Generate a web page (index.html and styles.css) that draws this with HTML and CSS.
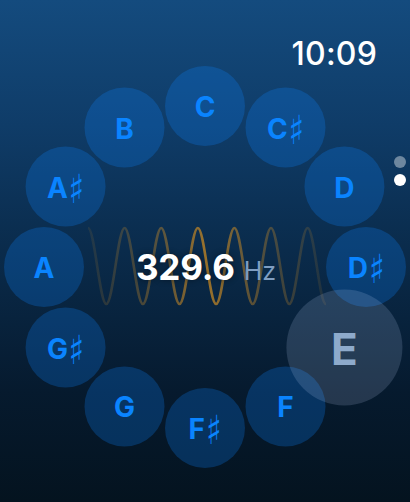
FILE: index.html
```html
<!DOCTYPE html>
<html lang="en">
<head>
<meta charset="utf-8">
<title>Tuner</title>
<link rel="stylesheet" href="styles.css">
</head>
<body>
<div class="screen">
  <header class="status">
    <span class="time">10:09</span>
  </header>
  <div class="pager">
    <span class="dot"></span>
    <span class="dot active"></span>
  </div>
  <main class="dial">
    <svg class="wave" width="238" height="84" viewBox="0 0 238 84" aria-hidden="true">
      <defs>
        <linearGradient id="wg" gradientUnits="userSpaceOnUse" x1="0" y1="0" x2="238" y2="0">
          <stop offset="0" stop-color="#b8822a" stop-opacity="0.12"/>
          <stop offset="0.3" stop-color="#b8822a" stop-opacity="0.45"/>
          <stop offset="0.5" stop-color="#c08524" stop-opacity="0.8"/>
          <stop offset="0.7" stop-color="#b8822a" stop-opacity="0.45"/>
          <stop offset="1" stop-color="#b8822a" stop-opacity="0.12"/>
        </linearGradient>
      </defs>
      <path fill="none" stroke="url(#wg)" stroke-width="2.6" stroke-linecap="round"
        d="M0,4 c6.66,0 11.64,76 18.3,76 c6.66,0 11.64,-76 18.3,-76 c6.66,0 11.64,76 18.3,76 c6.66,0 11.64,-76 18.3,-76 c6.66,0 11.64,76 18.3,76 c6.66,0 11.64,-76 18.3,-76 c6.66,0 11.64,76 18.3,76 c6.66,0 11.64,-76 18.3,-76 c6.66,0 11.64,76 18.3,76 c6.66,0 11.64,-76 18.3,-76 c6.66,0 11.64,76 18.3,76 c6.66,0 11.64,-76 18.3,-76 c6.66,0 11.64,76 18.3,76"/>
    </svg>
    <div class="freq"><span class="value">329.6</span><span class="unit">Hz</span></div>

    <div class="note n0">C</div>
    <div class="note n1">C<span class="sharp">♯</span></div>
    <div class="note n2">D</div>
    <div class="note n3">D<span class="sharp">♯</span></div>
    <div class="note n4 current">E</div>
    <div class="note n5">F</div>
    <div class="note n6">F<span class="sharp">♯</span></div>
    <div class="note n7">G</div>
    <div class="note n8">G<span class="sharp">♯</span></div>
    <div class="note n9">A</div>
    <div class="note n10">A<span class="sharp">♯</span></div>
    <div class="note n11">B</div>
  </main>
</div>
</body>
</html>
```

FILE: styles.css
```css
* { box-sizing: border-box; }

html, body {
  margin: 0;
  padding: 0;
}

body {
  width: 410px;
  height: 502px;
  overflow: hidden;
  font-family: Inter, "Liberation Sans", "DejaVu Sans", sans-serif;
  background: #05121f;
}

.screen {
  position: relative;
  width: 410px;
  height: 502px;
  overflow: hidden;
  background: linear-gradient(180deg, #144b7e 0%, #0f3c68 25%, #0a2b4b 50%, #061a2e 78%, #04131f 100%);
}

.status {
  display: flex;
  justify-content: flex-end;
  padding: 35px 33px 0 0;
  height: 73px;
}

.time {
  color: #ffffff;
  font-size: 32px;
  line-height: 38px;
  font-weight: 500;
  letter-spacing: 0.2px;
}

.pager {
  position: absolute;
  right: 4px;
  top: 156px;
  display: flex;
  flex-direction: column;
  gap: 6px;
}

.dot {
  width: 12px;
  height: 12px;
  border-radius: 50%;
  background: rgba(255, 255, 255, 0.4);
}

.dot.active {
  background: #ffffff;
}

.dial {
  position: relative;
  height: 388px;
  display: grid;
  place-items: center;
}

.wave {
  grid-area: 1 / 1;
  margin-left: 4px;
  margin-top: -2px;
}

.freq {
  grid-area: 1 / 1;
  display: flex;
  align-items: baseline;
  line-height: 1;
  z-index: 2;
  margin-left: 2px;
}

.value {
  color: #ffffff;
  font-size: 35px;
  font-weight: 700;
  letter-spacing: -0.2px;
  text-shadow: 0 0 6px rgba(0, 0, 0, 0.45);
}

.unit {
  margin-left: 9px;
  color: #7f9ec2;
  font-size: 25px;
  font-weight: 400;
}

.note {
  --a: 0deg;
  position: absolute;
  left: 50%;
  top: 50%;
  width: 80px;
  height: 80px;
  margin: -40px 0 0 -40px;
  border-radius: 50%;
  background: rgba(10, 132, 255, 0.25);
  color: #0a84ff;
  display: flex;
  align-items: center;
  justify-content: center;
  font-size: 28px;
  font-weight: 700;
  line-height: 1;
  padding-top: 2px;
  transform: rotate(var(--a)) translateY(-161px) rotate(calc(-1 * var(--a)));
  z-index: 1;
}

.sharp {
  font-family: "DejaVu Sans", sans-serif;
  font-weight: 400;
  font-size: 40px;
  line-height: 28px;
  margin-left: -1px;
  margin-right: -2px;
  transform: scaleX(0.8);
  position: relative;
  top: 1px;
}

.n0 { --a: 0deg; }
.n1 { --a: 30deg; }
.n2 { --a: 60deg; }
.n3 { --a: 90deg; }
.n4 { --a: 120deg; }
.n5 { --a: 150deg; }
.n6 { --a: 180deg; }
.n7 { --a: 210deg; }
.n8 { --a: 240deg; }
.n9 { --a: 270deg; }
.n10 { --a: 300deg; }
.n11 { --a: 330deg; }

.note.current {
  width: 116px;
  height: 116px;
  margin: -58px 0 0 -58px;
  background: rgba(200, 220, 255, 0.16);
  color: #8eaacb;
  font-size: 44px;
  z-index: 3;
}
```
